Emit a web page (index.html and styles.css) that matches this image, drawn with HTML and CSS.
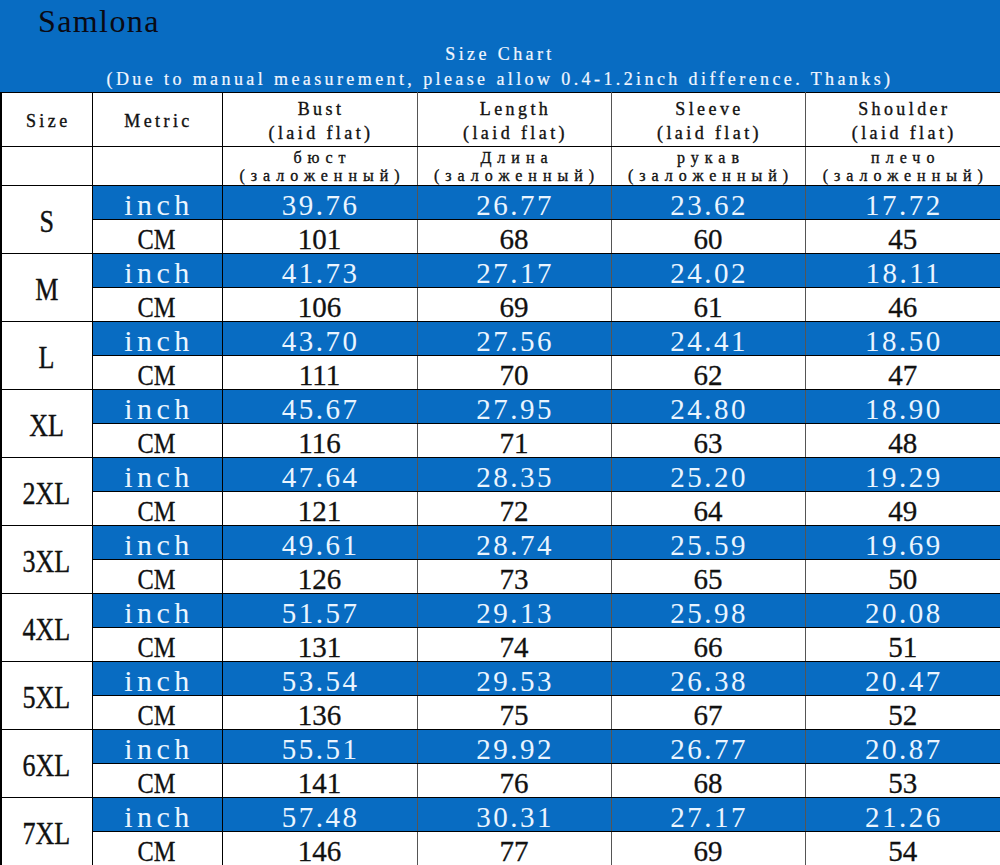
FILE: index.html
```html
<!DOCTYPE html>
<html>
<head>
<meta charset="utf-8">
<link rel="stylesheet" href="styles.css">
</head>
<body>
<div class="chart">
  <div class="banner">
    <div class="brand">Samlona</div>
    <div class="title">Size Chart</div>
    <div class="note">(Due to manual measurement, please allow 0.4-1.2inch difference. Thanks)</div>
  </div>
  <table class="grid">
    <colgroup>
      <col class="c-size"><col class="c-metric"><col class="c-bust"><col class="c-len"><col class="c-sleeve"><col class="c-shoulder">
    </colgroup>
    <thead>
      <tr class="h1">
        <th class="b-size">Size</th>
        <th class="b-metric">Metric</th>
        <th>Bust<br>(laid flat)</th>
        <th>Length<br>(laid flat)</th>
        <th>Sleeve<br>(laid flat)</th>
        <th>Shoulder<br>(laid flat)</th>
      </tr>
      <tr class="h2">
        <th class="b-size"></th>
        <th class="b-metric"></th>
        <th>бюст<br>(заложенный)</th>
        <th>Длина<br>(заложенный)</th>
        <th>рукав<br>(заложенный)</th>
        <th>плечо<br>(заложенный)</th>
      </tr>
    </thead>
    <tbody id="rows"></tbody>
  </table>
</div>
<script src="app.js"></script>
</body>
</html>
```
FILE: app.js
```js
var data = [
  ["S", "39.76","26.77","23.62","17.72", "101","68","60","45"],
  ["M", "41.73","27.17","24.02","18.11", "106","69","61","46"],
  ["L", "43.70","27.56","24.41","18.50", "111","70","62","47"],
  ["XL", "45.67","27.95","24.80","18.90", "116","71","63","48"],
  ["2XL", "47.64","28.35","25.20","19.29", "121","72","64","49"],
  ["3XL", "49.61","28.74","25.59","19.69", "126","73","65","50"],
  ["4XL", "51.57","29.13","25.98","20.08", "131","74","66","51"],
  ["5XL", "53.54","29.53","26.38","20.47", "136","75","67","52"],
  ["6XL", "55.51","29.92","26.77","20.87", "141","76","68","53"],
  ["7XL", "57.48","30.31","27.17","21.26", "146","77","69","54"]
];
var html = "";
data.forEach(function (r) {
  html += '<tr class="inch"><td class="size b-size" rowspan="2"><span class="sq">' + r[0] + '</span></td>' +
    '<td class="metric b-metric">inch</td>';
  for (var i = 1; i <= 4; i++) html += '<td>' + r[i] + '</td>';
  html += '</tr><tr class="cm"><td class="metric b-metric"><span class="sq">CM</span></td>';
  for (var j = 5; j <= 8; j++) html += '<td>' + r[j] + '</td>';
  html += '</tr>';
});
document.getElementById("rows").innerHTML = html;
```
FILE: styles.css
```css
html, body {
  margin: 0;
  padding: 0;
  background: #ffffff;
}
body {
  width: 1000px;
  height: 865px;
  overflow: hidden;
}
.chart {
  width: 1000px;
}
.banner {
  background: #086cc2;
  height: 92px;
  box-sizing: border-box;
  padding-top: 2px;
}
.brand {
  font-family: "Liberation Serif", serif;
  font-size: 32px;
  letter-spacing: 1.4px;
  color: #0a0a14;
  padding-left: 38px;
  line-height: 38px;
  height: 38px;
}
.title, .note {
  font-family: "Liberation Serif", serif;
  font-size: 18px;
  letter-spacing: 3.4px;
  color: #f2f7ff;
  text-align: center;
  line-height: 25px;
  -webkit-text-stroke: 0.2px #f2f7ff;
}
.title {
  margin-top: 2px;
}
.grid {
  width: 1000px;
  border-collapse: collapse;
  table-layout: fixed;
  border-left: 2px solid #000;
}
.c-size { width: 91px; }
.c-metric { width: 130px; }
.c-bust { width: 195px; }
.c-len { width: 194px; }
.c-sleeve { width: 194px; }
.c-shoulder { width: 196px; }

.grid th, .grid td {
  border: 1px solid #555;
  border-top-color: #000;
  border-bottom-color: #000;
  padding: 0;
  text-align: center;
  overflow: hidden;
  white-space: nowrap;
}
.grid .b-size, .grid .b-metric {
  border-left-color: #000;
  border-right-color: #000;
}
.grid tr > :last-child {
  border-right: 2px solid #000;
}
.grid th {
  font-weight: normal;
  color: #111;
  font-family: "Liberation Serif", serif;
  -webkit-text-stroke: 0.35px #111;
}
.h1 th {
  height: 54px;
  box-sizing: border-box;
  font-size: 18px;
  line-height: 24px;
  letter-spacing: 3.4px;
  padding-left: 3px;
  padding-top: 2px;
}
.h2 th {
  height: 39px;
  box-sizing: border-box;
  font-size: 16px;
  line-height: 18px;
  letter-spacing: 6px;
  padding-left: 6px;
  padding-top: 1px;
}
.grid td {
  font-family: "Liberation Serif", serif;
  font-size: 29px;
  line-height: 28px;
  padding-top: 5px;
  box-sizing: border-box;
  height: 34px;
}
.inch td {
  background: #086cc2;
  color: #eaf5ff;
  letter-spacing: 2.5px;
  padding-left: 2px;
}
.inch td.metric {
  letter-spacing: 4.5px;
  padding-left: 4px;
  font-size: 30px;
}
.cm td {
  background: #fff;
  color: #111;
  -webkit-text-stroke: 0.3px #111;
}
.grid td.size {
  background: #fff;
  color: #111;
  letter-spacing: 0;
  padding-left: 0;
  padding-top: 4px;
  font-size: 31px;
  -webkit-text-stroke: 0.4px #111;
}
.grid tbody tr:last-child td {
  border-bottom: 2px solid #000;
  height: 33px;
}
.sq {
  display: inline-block;
  transform: scaleX(0.84);
}
```
